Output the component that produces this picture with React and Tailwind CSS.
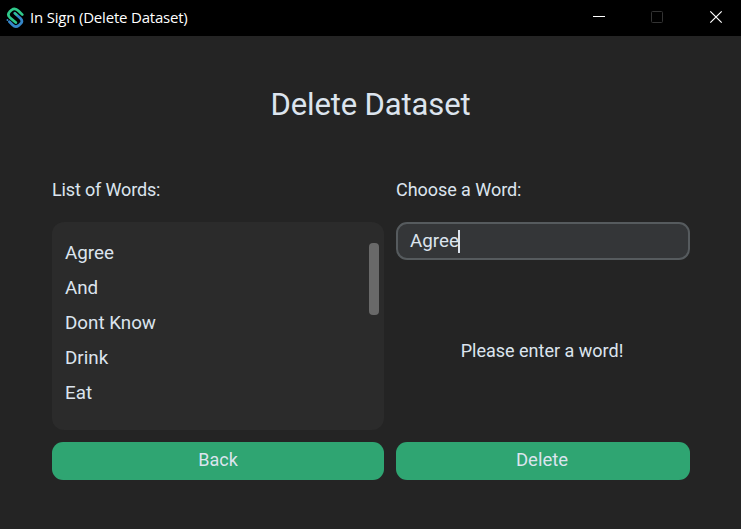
const words = ["Agree", "And", "Dont Know", "Drink", "Eat"];

function Logo() {
  return (
    <svg className="ml-[5px] h-[22px] w-5 shrink-0" viewBox="0 0 20 22" fill="none" strokeLinecap="round" strokeLinejoin="round" strokeWidth="2.7">
      <path d="M4.4 14.8 7.4 17.8Q10.6 21 13.8 18.4L15.8 16.6Q18.2 14 15.4 11.2L9.8 6.2" stroke="#3586c8" />
      <path d="M17.3 7.6 13.6 4Q10 .4 6.6 3L4.6 4.8Q2 7.6 4.8 10.4L10.8 15.6" stroke="#2fc98a" />
      <path d="M9.8 6.2 11.6 7.8" stroke="#2fc98a" strokeWidth="2" />
      <path d="M2.4 13h.1" stroke="#3586c8" strokeWidth="1.8" />
    </svg>
  );
}

function TitleBar() {
  return (
    <header className="flex h-9 items-center bg-black">
      <Logo />
      <span className="mb-[2px] ml-[5px] whitespace-nowrap font-['Open_Sans',sans-serif] text-[15px] leading-5 tracking-[-0.2px] text-white">
        In Sign (Delete Dataset)
      </span>
      <svg className="ml-auto h-9 w-[171px] shrink-0" viewBox="0 0 171 36" fill="none">
        <path d="M23 16.5h12" stroke="#fff" />
        <rect x="81.5" y="11.5" width="11" height="11" rx="1" stroke="#333" />
        <path d="m140.3 11.3 11.4 11.4m0-11.4-11.4 11.4" stroke="#fff" strokeWidth="1.2" />
      </svg>
    </header>
  );
}

function Button({ children, className }) {
  return (
    <button className={`h-[38px] w-full rounded-[11px] bg-[#2fa572] pb-[3px] text-[18.5px] leading-5 text-[#dce4ee] ${className}`}>
      {children}
    </button>
  );
}

export default function App() {
  return (
    <div className="flex h-[529px] w-[741px] flex-col overflow-hidden bg-[#242424] font-[Roboto,sans-serif] text-[18px] text-[#dce4ee]">
      <TitleBar />
      <main className="px-[52px] pt-[49px]">
        <h1 className="mb-[53px] text-center text-[31px] leading-10 tracking-[-0.12px]">Delete Dataset</h1>
        <div className="grid grid-cols-[332px_294px] gap-x-3">
          <h2 className="h-[44px] leading-6 tracking-[-0.15px]">List of Words:</h2>
          <h2 className="h-[44px] leading-6 tracking-[-0.05px]">Choose a Word:</h2>
          <div className="flex h-[208px] justify-between rounded-[12px] bg-[#2b2b2b] pl-[13px] pr-[5px]">
            <ul className="pt-[14px] text-[18.8px]">
              {words.map((word) => (
                <li key={word} className="h-[35px] leading-[35px]">{word}</li>
              ))}
            </ul>
            <div className="mt-[21px] h-[72px] w-[10px] rounded-[4px] bg-[#696969]" />
          </div>
          <div className="flex flex-col">
            <div className="flex h-[38px] items-center rounded-[11px] border-2 border-[#565b5e] bg-[#343638] pl-3">
              <span className="text-[18.8px] leading-6">Agree</span>
              <span className="-ml-px h-[23px] w-[2px] bg-[#dce4ee]" />
            </div>
            <p className="mt-[79px] pr-[2px] text-center leading-6">Please enter a word!</p>
          </div>
          <div className="mt-3"><Button className="pr-0 text-[18px]">Back</Button></div>
          <div className="mt-3"><Button className="pr-[2px]">Delete</Button></div>
        </div>
      </main>
    </div>
  );
}
